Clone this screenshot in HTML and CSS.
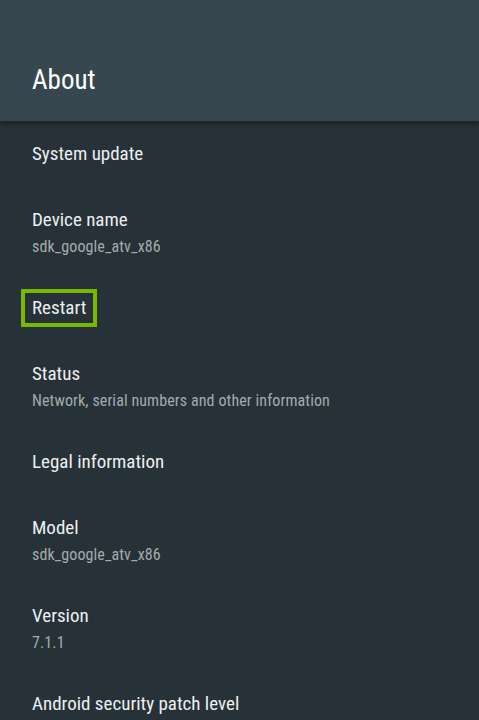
FILE: index.html
```html
<!DOCTYPE html>
<html>
<head>
<meta charset="utf-8">
<link rel="stylesheet" href="styles.css">
</head>
<body>
<header class="header">
  <h1 class="title">About</h1>
</header>
<main class="list">
  <div class="item single"><span class="item-title">System update</span></div>
  <div class="item double"><span class="item-title">Device name</span><span class="item-sub">sdk_google_atv_x86</span></div>
  <div class="item single"><span class="item-title focused">Restart</span></div>
  <div class="item double"><span class="item-title">Status</span><span class="item-sub">Network, serial numbers and other information</span></div>
  <div class="item single"><span class="item-title">Legal information</span></div>
  <div class="item double"><span class="item-title">Model</span><span class="item-sub">sdk_google_atv_x86</span></div>
  <div class="item double"><span class="item-title">Version</span><span class="item-sub">7.1.1</span></div>
  <div class="item last"><span class="item-title">Android security patch level</span></div>
</main>
</body>
</html>
```
FILE: styles.css
```css
html, body {
  margin: 0;
  padding: 0;
}
body {
  width: 479px;
  height: 720px;
  overflow: hidden;
  background: #263238;
  font-family: Roboto, "Noto Sans", sans-serif;
  font-stretch: condensed;
}
.header {
  position: relative;
  z-index: 1;
  height: 121px;
  background: #37474f;
  box-shadow: 0 2px 6px rgba(0, 0, 0, 0.45);
  display: flex;
  align-items: flex-end;
  padding: 0 32px 25px;
  box-sizing: border-box;
}
.title {
  margin: 0;
  font-size: 27px;
  font-weight: 400;
  color: #ffffff;
  line-height: 32px;
}
.list {
  display: flex;
  flex-direction: column;
  padding: 22px 32px 0;
}
.item {
  display: flex;
  flex-direction: column;
  align-items: flex-start;
}
.item.single { height: 66px; }
.item.double { height: 88px; }
.item-title {
  font-size: 19px;
  line-height: 22px;
  color: #eceff1;
}
.item-sub {
  margin-top: 7px;
  font-size: 16px;
  letter-spacing: 0.1px;
  line-height: 18px;
  color: #a4aaad;
}
.focused {
  border: 4px solid #76b900;
  padding: 4px 7px;
  margin: -8px 0 -8px -11px;
}
```
